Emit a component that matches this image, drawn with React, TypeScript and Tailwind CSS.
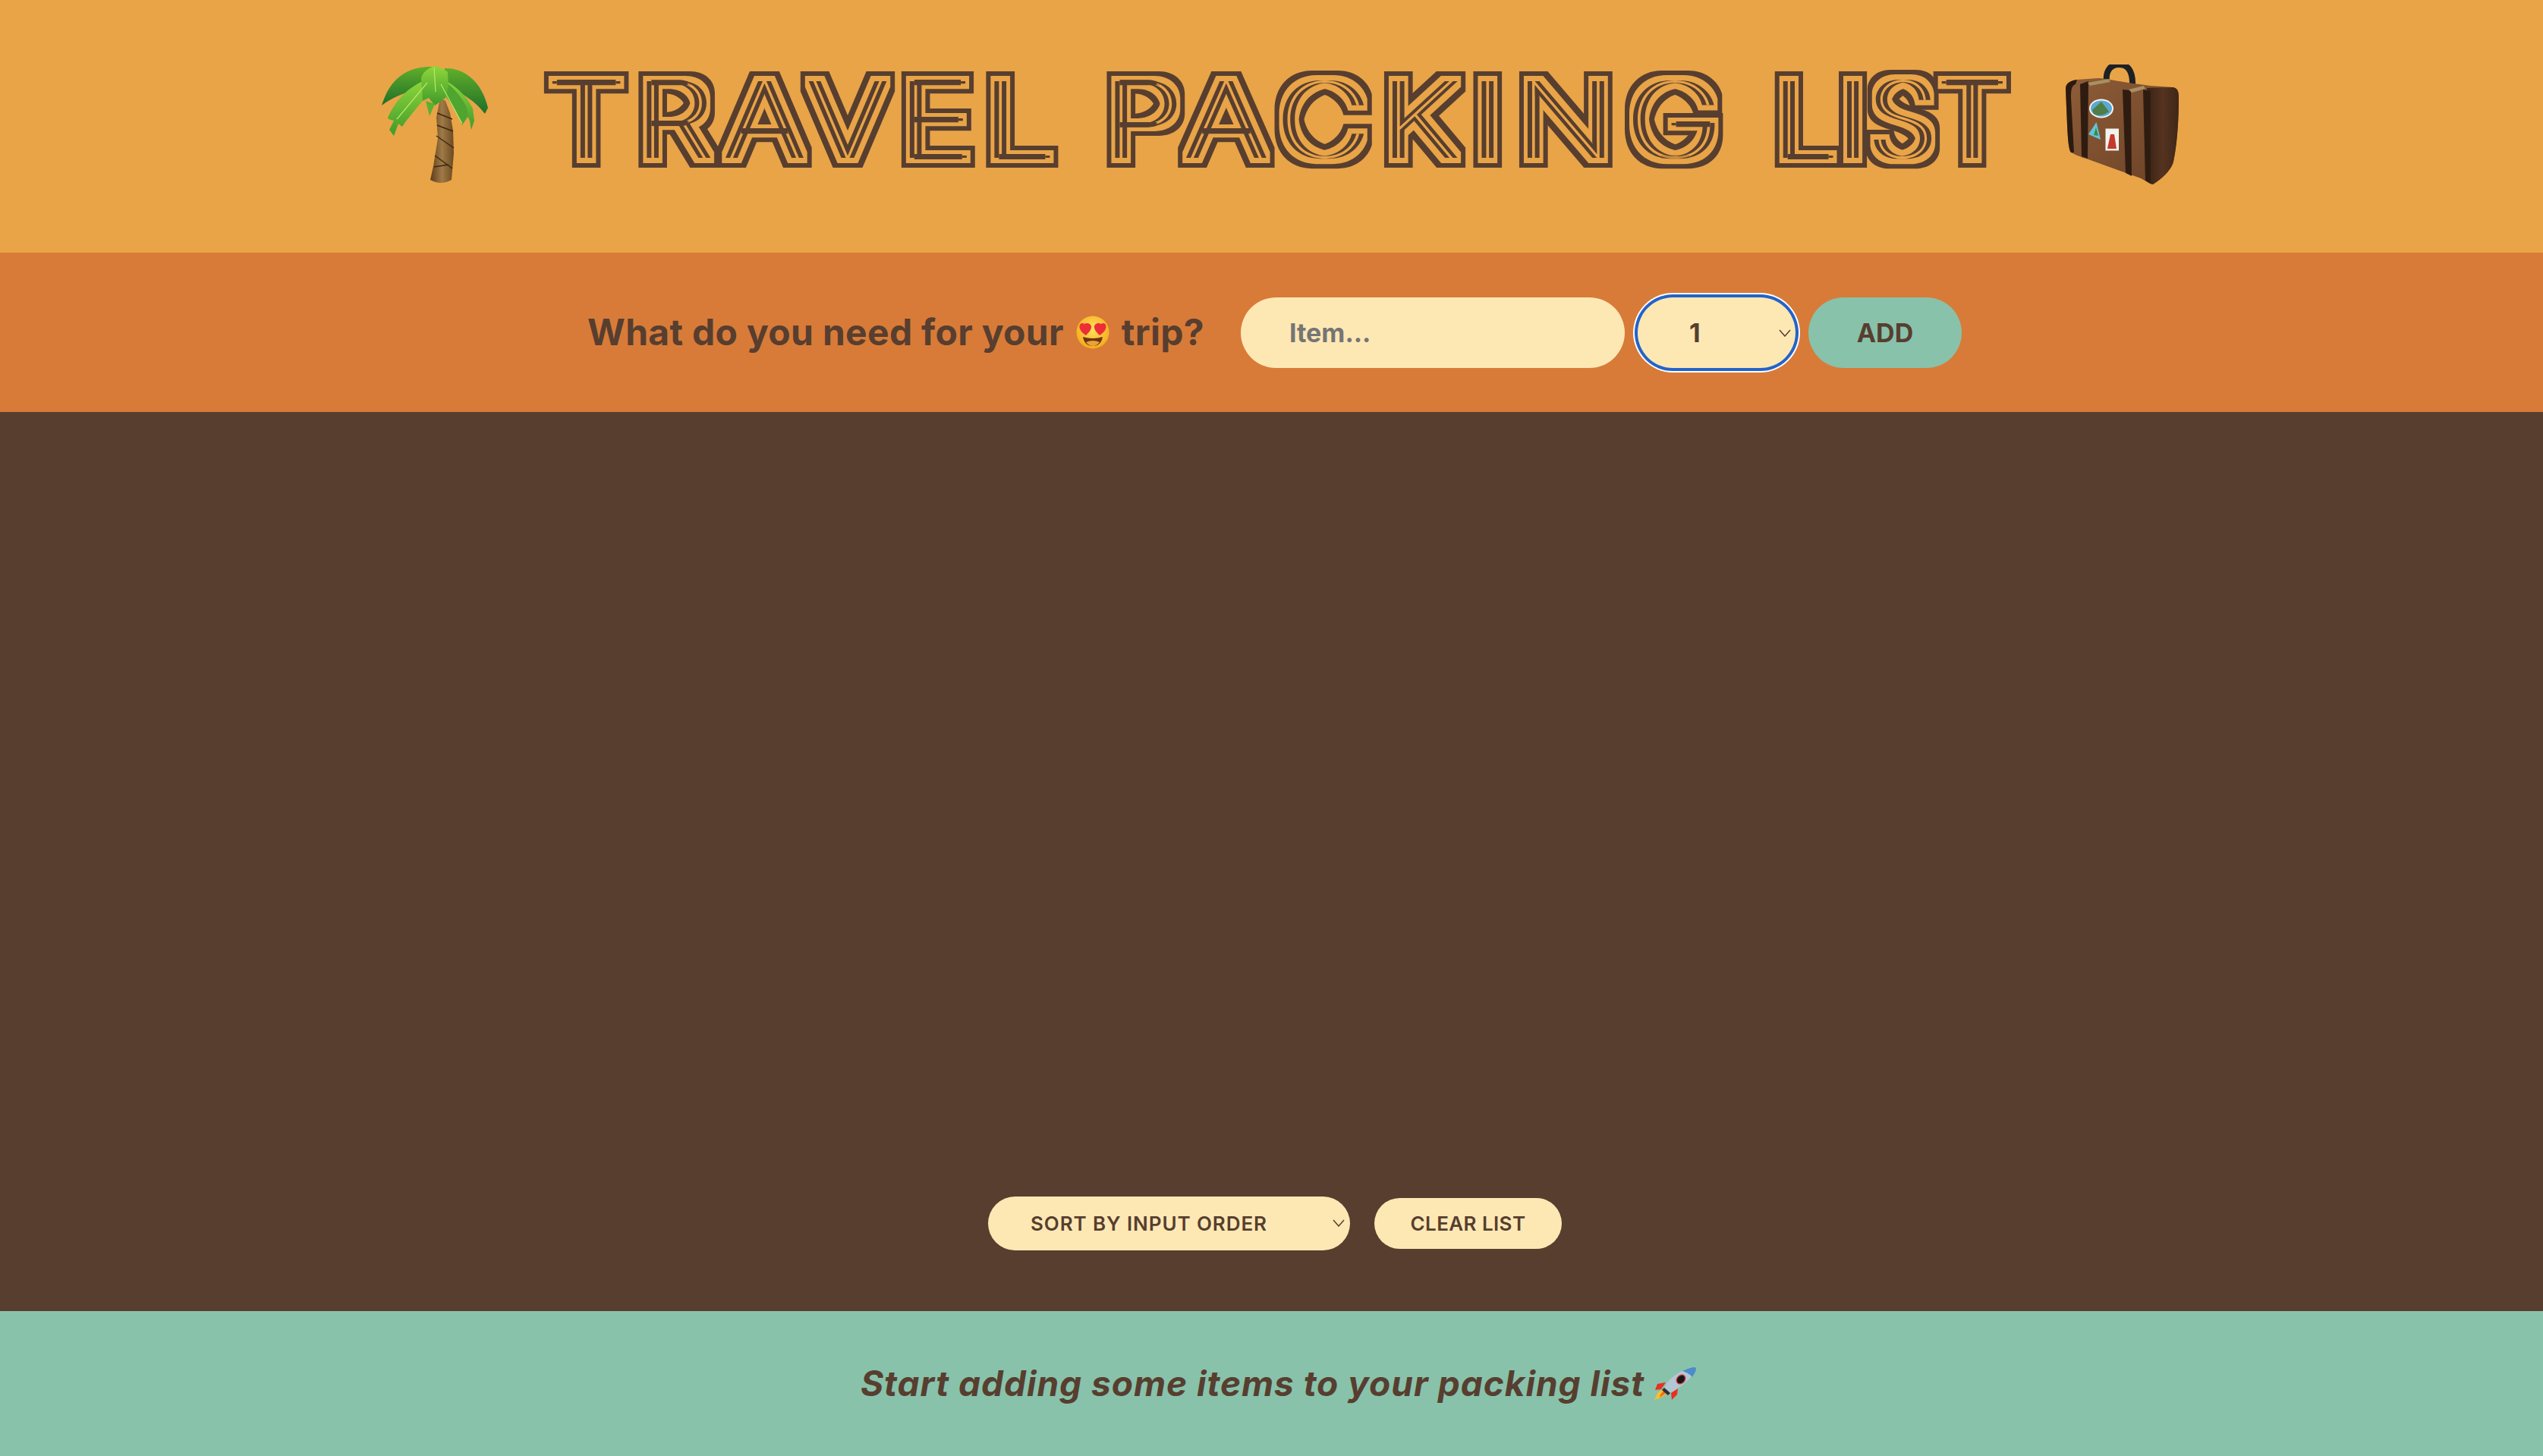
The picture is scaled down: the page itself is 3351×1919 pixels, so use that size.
import React from "react";

const ink = "#573e2f";

function Rings() {
  return (
    <svg width="0" height="0" className="absolute">
      <defs>
        <filter id="rings" x="-5%" y="-40%" width="110%" height="180%" colorInterpolationFilters="sRGB">
          <feMorphology in="SourceAlpha" operator="dilate" radius="6 0" result="a" />
          <feComposite in="a" in2="SourceAlpha" operator="out" result="r1" />
          <feMorphology in="SourceAlpha" operator="erode" radius="18 0" result="h0" />
          <feMorphology in="h0" operator="dilate" radius="18 2" result="r0" />
          <feMorphology in="SourceAlpha" operator="dilate" radius="11 7" result="b" />
          <feMorphology in="SourceAlpha" operator="dilate" radius="17 13" result="c" />
          <feComposite in="c" in2="b" operator="out" result="r2" />
          <feMerge result="m">
            <feMergeNode in="r0" />
            <feMergeNode in="r1" />
            <feMergeNode in="r2" />
          </feMerge>
          <feFlood floodColor={ink} result="f" />
          <feComposite in="f" in2="m" operator="in" />
        </filter>
      </defs>
    </svg>
  );
}

function Palm() {
  return (
    <svg viewBox="0 0 142 155" className="w-[142px] h-[155px] shrink-0">
      <defs>
        <linearGradient id="trunk" x1="0" x2="1" y1="0" y2="0">
          <stop offset="0" stopColor="#5d3d1c" />
          <stop offset="0.5" stopColor="#a07a46" />
          <stop offset="1" stopColor="#6c4a22" />
        </linearGradient>
        <linearGradient id="leafD" x1="0" x2="0" y1="0" y2="1">
          <stop offset="0" stopColor="#5fae2a" />
          <stop offset="1" stopColor="#1f6e2a" />
        </linearGradient>
        <linearGradient id="leafB" x1="0" x2="0" y1="0" y2="1">
          <stop offset="0" stopColor="#8fd63a" />
          <stop offset="1" stopColor="#3f9a2c" />
        </linearGradient>
      </defs>
      <path d="M79 42 L74 68 L76 95 L70 132 L66 150 Q80 158 94 150 L97 115 L96 85 L92 62 L86 46 Z" fill="url(#trunk)" />
      <path d="M75 62 L95 70 M75 78 L96 86 M74 92 L97 108 M72 118 L95 135 M71 133 L90 130" stroke="#3d2712" strokeWidth="1.5" fill="none" />
      <path d="M70 1 C40 0 14 12 2 52 C14 42 32 36 62 24 Z" fill="url(#leafD)" />
      <path d="M85 3 C110 2 134 20 142 55 L138 63 C128 50 112 36 82 24 Z" fill="url(#leafD)" />
      <path d="M60 18 C38 28 22 42 10 68 L11 70 L18 72 L12 84 L18 92 L24 76 L29 80 C44 58 60 44 66 30 Z" fill="url(#leafB)" />
      <path d="M76 20 C96 36 112 58 118 72 L120 84 L124 72 L122 56 C112 36 98 26 84 18 Z" fill="url(#leafB)" />
      <path d="M74 24 C86 40 100 56 108 78 L116 66 L114 54 C104 36 94 26 82 18 Z" fill="#4fa530" />
      <path d="M71 0 C62 4 56 8 54 16 L56 46 L64 42 L72 52 L86 42 L90 28 L89 8 C84 4 76 0 71 0 Z" fill="url(#leafB)" />
      <path d="M60 46 L65 66 L72 50 Z" fill="#5cb032" />
      <path d="M71 2 L73 34 M62 22 L22 70 M80 24 L108 76" stroke="#b7ea6a" strokeWidth="1.2" fill="none" />
    </svg>
  );
}

function Luggage() {
  return (
    <svg viewBox="0 0 150 158" className="w-[150px] h-[158px] shrink-0">
      <defs>
        <linearGradient id="case" x1="0" x2="1" y1="0" y2="1">
          <stop offset="0" stopColor="#8f5d38" />
          <stop offset="1" stopColor="#6a4126" />
        </linearGradient>
        <linearGradient id="side" x1="0" x2="1" y1="0" y2="0">
          <stop offset="0" stopColor="#3a2315" />
          <stop offset="0.5" stopColor="#553320" />
          <stop offset="1" stopColor="#3f2617" />
        </linearGradient>
      </defs>
      <path d="M55 24 C53 6 62 0 71 0 C81 0 90 6 89 28" fill="none" stroke="#1d2024" strokeWidth="8" />
      <path d="M1 32 C1 24 8 21 16 20 L44 18 C50 18 80 24 112 28 L142 30 C148 31 150 34 150 44 C150 80 147 110 143 128 C140 140 126 152 116 158 C112 158 108 154 100 150 L28 124 C20 122 12 118 8 116 C5 112 4 100 3 80 Z" fill="url(#case)" />
      <path d="M108 31 L142 30 C148 31 150 34 150 44 C150 80 147 110 143 128 C140 140 126 152 116 158 C114 158 112 156 108 154 Z" fill="url(#side)" />
      <path d="M1 32 C1 24 8 21 16 20 L14 26 C9 28 8 32 8 44 L12 116 L8 116 C5 112 4 100 3 80 Z" fill="#2b1a10" />
      <path d="M20 26 L31 22 L30 124 L22 121 Z" fill="#2f1c11" />
      <path d="M76 33 L87 34 L88 147 L80 143 Z" fill="#2f1c11" />
      <path d="M103 33 L113 35 L113 157 L106 153 Z" fill="#2f1c11" />
      <path d="M30 24 L58 19 L60 23 L33 28 Z M84 33 L104 28 L106 32 L88 37 Z" fill="#a89060" />
      <ellipse cx="48" cy="58" rx="16" ry="12.5" fill="#f3f3f3" />
      <ellipse cx="48" cy="58" rx="14" ry="10.5" fill="#5aa9d0" />
      <path d="M36 60 L48 49 L58 62 Q48 70 38 65 Z" fill="#4f7d46" />
      <path d="M41.5 76 L31 92 L47 99 Z" fill="#62c3dd" />
      <path d="M41 83 L38 93 L44 94 Z" fill="#3d8a3a" />
      <rect x="53.5" y="84.5" width="17.5" height="29" fill="#f2f2ee" />
      <path d="M60 92 L65 92 L68 111 L56 111 Z" fill="#c7392b" />
    </svg>
  );
}

function HeartEyes() {
  return (
    <svg viewBox="0 0 44 44" className="w-[44px] h-[44px] shrink-0">
      <defs>
        <radialGradient id="face" cx="0.5" cy="0.4" r="0.6">
          <stop offset="0" stopColor="#ffe45c" />
          <stop offset="1" stopColor="#f5a91c" />
        </radialGradient>
      </defs>
      <circle cx="22" cy="22" r="21.5" fill="url(#face)" />
      <path d="M11 9 C7 6 3 10 5 15 C6 19 10 22 13 24 C16 21 20 17 20 13 C20 8 14 7 11 9 Z" fill="#ee2d36" transform="translate(0 2)" />
      <path d="M33 9 C37 6 41 10 39 15 C38 19 34 22 31 24 C28 21 24 17 24 13 C24 8 30 7 33 9 Z" fill="#ee2d36" transform="translate(0 2)" />
      <path d="M9 28 Q22 32 35 28 Q33 40 22 40 Q11 40 9 28 Z" fill="#6b3410" />
      <path d="M13 35 Q22 31 31 35 Q27 40 22 40 Q17 40 13 35 Z" fill="#e8a23c" />
    </svg>
  );
}

function Rocket() {
  return (
    <svg viewBox="0 0 56 43" className="w-[56px] h-[43px] shrink-0">
      <path d="M16 20 L5 22 L2 30 L10 29 Z" fill="#e8301f" />
      <path d="M32 28 L31 36 L24 43 L23 34 Z" fill="#e8301f" />
      <path d="M14 28 L6 33 L1 43 L10 40 L18 34 Z" fill="#f6c02b" />
      <path d="M14 30 L9 36 L8 40 L16 34 Z" fill="#ef6a1f" />
      <path d="M55 0 C46 0 30 6 18 20 L14 27 L22 34 L30 29 C42 21 53 11 56 2 Z" fill="#b4c6d4" />
      <path d="M55 0 C49 0 44 2 38 5 C44 7 49 10 51 13 C54 8 56 5 56 2 Z" fill="#4c8cc8" />
      <ellipse cx="36" cy="16" rx="5" ry="6.5" fill="#15171c" transform="rotate(42 36 16)" stroke="#c8352a" strokeWidth="1.4" />
      <path d="M14 27 L22 34 L19 37 L11 30 Z" fill="#2b2f38" />
    </svg>
  );
}

function Chevron({ className }: { className: string }) {
  return (
    <svg viewBox="0 0 16 10" className={className} fill="none" stroke={ink} strokeWidth="1.5">
      <path d="M1 1 L8 9 L15 1" />
    </svg>
  );
}

export default function App() {
  return (
    <div className="h-[1919px] flex flex-col font-['Inter',sans-serif] text-[#573e2f]">
      <Rings />
      <header className="h-[333px] bg-[#e9a447] flex items-center justify-center gap-[67px] pl-[21px]">
        <div className="mr-[6px] mb-[5px]">
          <Palm />
        </div>
        <h1 className="w-[1938px] mb-[18px] flex text-[139px] leading-none font-thin [filter:url(#rings)] whitespace-nowrap">
          <span className="w-[741px] pl-[8px]">
            <span className="inline-block origin-left scale-x-[1.136] tracking-[17px]">TRAVEL</span>
          </span>{" "}
          <span className="w-[883px]">
            <span className="inline-block origin-left scale-x-[1.173] tracking-[17px]">PACKING</span>
          </span>{" "}
          <span className="w-[314px]">
            <span className="inline-block origin-left scale-x-[1] tracking-[6px]">LIST</span>
          </span>
        </h1>
        <div className="mb-[5px]">
          <Luggage />
        </div>
      </header>
      <form className="h-[210px] bg-[#d87b38] flex items-center justify-center gap-[17px] pl-[8px]">
        <h3 className="text-[48px] tracking-[0.3px] font-bold flex items-center gap-[16px] mr-[31px] whitespace-nowrap">
          <span>What do you need for your</span>
          <HeartEyes />
          <span>trip?</span>
        </h3>
        <input
          placeholder="Item..."
          className="w-[506px] h-[93px] rounded-full bg-[#fde8b4] pl-[64px] text-[34px] font-bold placeholder:text-[#757575] outline-none"
        />
        <div className="relative w-[208px] h-[93px]">
          <select className="appearance-none w-full h-full rounded-full bg-[#fde8b4] pl-[68px] text-[34px] font-bold shadow-[0_0_0_4px_#2463c9,0_0_0_6px_#ffffff] outline-none">
            <option>1</option>
          </select>
          <Chevron className="absolute right-[6px] top-[42px] w-[16px] h-[10px]" />
        </div>
        <button type="button" className="w-[202px] h-[93px] rounded-full bg-[#88c2ab] text-[34px] font-bold">
          ADD
        </button>
      </form>
      <main className="flex-1 bg-[#573e2f] flex items-end justify-center gap-[32px] pb-[80px] pl-[9px]">
        <div className="relative w-[477px] h-[71px]">
          <select className="appearance-none w-full h-full rounded-full bg-[#fde8b4] pl-[56px] text-[26px] tracking-[0.9px] font-semibold outline-none">
            <option>SORT BY INPUT ORDER</option>
          </select>
          <Chevron className="absolute right-[7px] top-[30px] w-[16px] h-[10px]" />
        </div>
        <button type="button" className="w-[247px] h-[67px] mb-[2px] rounded-full bg-[#fde8b4] text-[26px] tracking-[0.4px] font-semibold">
          CLEAR LIST
        </button>
      </main>
      <footer className="h-[191px] bg-[#88c2ab] flex items-center justify-center gap-[12px] pl-[18px] text-[46px] tracking-[1px] font-bold italic">
        <span>Start adding some items to your packing list</span>
        <Rocket />
      </footer>
    </div>
  );
}
